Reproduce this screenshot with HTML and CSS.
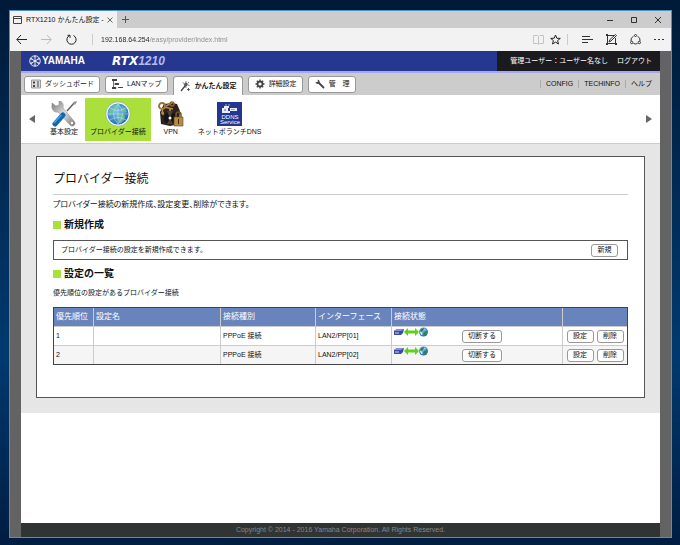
FILE: index.html
```
<!DOCTYPE html>
<html lang="ja">
<head>
  <meta charset="UTF-8">
  <meta name="viewport" content="width=device-width, initial-scale=1.0">
  <title>RTX1210 かんたん設定</title>
  <link rel="stylesheet" href="styles.css">
</head>
<body>

  <!-- Shared icons -->
  <svg class="defs" aria-hidden="true">
    <defs>
      <radialGradient id="ocean" cx="40%" cy="35%" r="70%">
        <stop offset="0" stop-color="#7cc8ef"/>
        <stop offset="1" stop-color="#1c66b0"/>
      </radialGradient>
      <linearGradient id="steel" x1="0" y1="0" x2="1" y2="1">
        <stop offset="0" stop-color="#777"/>
        <stop offset=".5" stop-color="#ddd"/>
        <stop offset="1" stop-color="#777"/>
      </linearGradient>
    </defs>
    <symbol id="link-up" viewBox="0 0 34 10">
      <path d="M0 4l3-2h7l-1 4-2 2H0z" fill="#3d4ba3"/>
      <path d="M0 4l3-2h7l-3 2z" fill="#8892d0"/>
      <path d="M1 6h4" stroke="#cdd3f5" stroke-width="1"/>
      <path d="M10 5l4-4v2.500h7V1l4 4-4 4V6.500h-7V9z" fill="#5fd01c"/>
      <circle cx="29.500" cy="5" r="4.500" fill="url(#ocean)"/>
      <path d="M27 2l3-1-1 3-2 1-1-1zM30 5l3-1-1 3-2 2-1-2z" fill="#3b7f45"/>
      <path d="M26 5l2 1v2zM30 2l2 1" stroke="#dff3ff" stroke-width=".6" fill="#dff3ff"/>
    </symbol>
  </svg>

  <div class="window">
    <!-- Browser tabs -->
    <div class="tab-strip">
      <div class="browser-tab">
        <svg width="10" height="10" viewBox="0 0 10 10" fill="none" stroke="#444"><path d="M.5 1.500h8v7h-8zM.5 3.500h8"/></svg>
        <span class="tab-title">RTX1210 かんたん設定 -</span>
        <button type="button" aria-label="タブを閉じる"><svg width="6" height="6" viewBox="0 0 6 6" stroke="#444" stroke-width=".8"><path d="M.5.5l5 5M5.500.5l-5 5"/></svg></button>
      </div>
      <button type="button" class="new-tab" aria-label="新しいタブ"><svg width="7" height="7" viewBox="0 0 7 7" stroke="#555"><path d="M3.500 0v7M0 3.500h7"/></svg></button>
      <div class="window-buttons">
        <button type="button" aria-label="最小化"><svg width="6" height="6" viewBox="0 0 6 6" stroke="#333"><path d="M0 3.500h6"/></svg></button>
        <button type="button" aria-label="最大化"><svg width="6" height="6" viewBox="0 0 6 6" stroke="#333" fill="none"><path d="M.5.5h5v5h-5z"/></svg></button>
        <button type="button" aria-label="閉じる"><svg width="6" height="6" viewBox="0 0 6 6" stroke="#333"><path d="M0 0l6 6M6 0L0 6"/></svg></button>
      </div>
    </div>

    <!-- Browser toolbar -->
    <div class="toolbar">
      <div class="history">
        <button type="button" aria-label="戻る"><svg width="11" height="11" viewBox="0 0 11 11" fill="none" stroke="#222"><path d="M5 1L.8 5.500 5 10M1 5.500h10"/></svg></button>
        <button type="button" aria-label="進む"><svg width="11" height="11" viewBox="0 0 11 11" fill="none" stroke="#bbb"><path d="M6 1l4.200 4.500L6 10M10 5.500H0"/></svg></button>
        <button type="button" aria-label="更新"><svg width="11" height="11" viewBox="0 0 11 11" fill="none" stroke="#222"><path d="M3.500 1.500A4.600 4.600 0 1 0 7.500 1.500M1.500 1.300h2.500v2.500"/></svg></button>
      </div>
      <input class="address" type="text" aria-label="アドレス" value="192.168.64.254/easy/provider/index.html">
      <div class="page-tools">
        <button type="button" aria-label="読み取りビュー"><svg width="11" height="11" viewBox="0 0 11 11" fill="none" stroke="#c4c4c4"><path d="M5.500 2v8M.5 1.500h4l1 1 1-1h4v8h-4l-1 1-1-1h-4z"/></svg></button>
        <button type="button" aria-label="お気に入り"><svg width="11" height="11" viewBox="0 0 11 11" fill="none" stroke="#222"><path d="M5.500 1l1.300 3.200 3.500.2-2.700 2.200.9 3.400-3-1.900-3 1.900.9-3.400L.7 4.400l3.500-.2z"/></svg></button>
      </div>
      <div class="browser-tools">
        <button type="button" aria-label="ハブ"><svg width="11" height="11" viewBox="0 0 11 11" stroke="#333"><path d="M0 2.500h8M0 5.500h11M0 8.500h6"/></svg></button>
        <button type="button" aria-label="Web ノート"><svg width="11" height="11" viewBox="0 0 11 11" fill="none" stroke="#333"><path d="M8 1.500H1.500v8h8V4M3 8l1-2.500 5.500-5 1 1L5 7z"/><path d="M0 0h2v2H0zM0 9h2v2H0zM9 9h2v2H9z" fill="#333" stroke="none"/></svg></button>
        <button type="button" aria-label="共有"><svg width="11" height="11" viewBox="0 0 11 11" fill="none" stroke="#333"><path d="M3.500 2.200A4.500 4.500 0 0 0 1 7M7.500 2.200A4.500 4.500 0 0 1 10 7M3.500 9.500q2 1 4 0"/><circle cx="5.500" cy="1.500" r="1"/><circle cx="1.700" cy="8.500" r="1.200"/><circle cx="9.300" cy="8.500" r="1.200"/></svg></button>
        <button type="button" aria-label="その他"><svg width="11" height="11" viewBox="0 0 11 11" fill="#333"><path d="M0 5h2v1H0zM4 5h2v1H4zM8 5h2v1H8z"/></svg></button>
      </div>
    </div>

    <div class="viewport">
      <div class="page">
        <!-- Header -->
        <header>
          <div class="logo">
            <svg width="12" height="12" viewBox="0 0 12 12" fill="none" stroke="#fff">
              <circle cx="6" cy="6" r="5.300" stroke-width=".8"/>
              <path d="M6 1v10M1.700 3.500l8.600 5M10.300 3.500l-8.600 5" stroke-width=".9"/>
              <path d="M4.800 2.500L6 1.200l1.200 1.300M4.800 9.500L6 10.800l1.200-1.300M2 5.200l-.2-1.700 1.700-.2M10 5.200l.2-1.700-1.700-.2M2 6.800l-.2 1.700 1.700.2M10 6.800l.2 1.700-1.700.2" stroke-width=".6"/>
            </svg>
            <span class="brand">YAMAHA</span>
          </div>
          <div class="model">RTX<span>1210</span></div>
          <div class="user-bar">
            <span>管理ユーザー：ユーザー名なし</span>
            <a href="#logout">ログアウト</a>
          </div>
        </header>

        <!-- Main menu -->
        <nav class="main-nav">
          <a class="nav-tab" href="#dashboard">
            <svg width="10" height="10" viewBox="0 0 10 10"><path d="M.5 1h9v8h-9z" fill="#ddd" stroke="#777" stroke-width=".7"/><path d="M2 2.500h2v2H2zM2 6h2v2H2zM6 2.500h2v1H6zM6 4.500h2v1H6zM6 6.500h2v1H6z" fill="#444"/></svg>
            ダッシュボード
          </a>
          <a class="nav-tab" href="#lanmap">
            <svg width="11" height="10" viewBox="0 0 11 10"><path d="M1.500 1v8M1.500 5h2M1.500 9h3" fill="none" stroke="#777"/><path d="M0 0h5v2H0zM3 4h4v2H3zM0 8h4v2H0zM6 8h5v1H6z" fill="#444"/></svg>
            LANマップ
          </a>
          <a class="nav-tab active" href="#easy">
            <svg width="11" height="11" viewBox="0 0 11 11" fill="none" stroke="#444"><path d="M1 10l4-5" stroke-width="1.300"/><path d="M4 2.500L2.500 1.500M6 2V0M8 4l1.500.5M7.500 2.500L9 1M5.500 5l.5 2" stroke-width=".7"/><path d="M8.500 7v3M7 8.500h3" stroke-width=".8"/><circle cx="5.800" cy="3.600" r="1.400" fill="#666"/></svg>
            かんたん設定
          </a>
          <a class="nav-tab" href="#detail">
            <svg width="10" height="10" viewBox="0 0 10 10" fill="none" stroke="#444"><circle cx="5" cy="5" r="2.500" stroke-width="1.800"/><path d="M5 .5V2M5 8v1.500M.5 5H2M8 5h1.500M1.800 1.800l1 1M7.200 7.200l1 1M8.200 1.800l-1 1M2.800 7.200l-1 1" stroke-width="1.400"/></svg>
            詳細設定
          </a>
          <a class="nav-tab" href="#admin">
            <svg width="10" height="10" viewBox="0 0 10 10" fill="none" stroke="#444"><path d="M4 4l4.500 4.500" stroke-width="1.800" stroke-linecap="round"/><path d="M2.500.8l.5 1.700-1 .8-1.400-.5C.5 5 3 5.500 4.300 4.300 5.300 3 4.500.8 2.500.8z" fill="#444" stroke="none"/></svg>
            管　理
          </a>
          <ul class="sub-links">
            <li><a href="#config">CONFIG</a></li>
            <li><a href="#techinfo">TECHINFO</a></li>
            <li><a href="#help">ヘルプ</a></li>
          </ul>
        </nav>

        <!-- Easy setup menu -->
        <nav class="icon-nav">
          <button type="button" aria-label="前へ"><svg width="6" height="8" viewBox="0 0 6 8" fill="#666"><path d="M6 0v8L0 4z"/></svg></button>
          <div class="icon-list">
            <a class="icon-item" href="#basic">
              <svg width="26" height="26" viewBox="0 0 26 26">
                <path d="M24 1l-8 9" stroke="#666" stroke-width="1.600"/>
                <path d="M22 2l3-2 1 1-2 3z" fill="#999"/>
                <path d="M15 11l-3 3" stroke="#888" stroke-width="2"/>
                <path d="M1 2l4 3 3-1V0c3 0 5 3 4 7l11 13c3 3-1 7-4 4L7 11c-4 1-7-3-6-7z" fill="url(#steel)" stroke="#888" stroke-width=".5"/>
                <circle cx="21" cy="22" r="1.200" fill="#fff"/>
                <path d="M12 14L4 23" stroke="#1265b4" stroke-width="5" stroke-linecap="round"/>
                <path d="M10.500 14L3 22" stroke="#4aa3e8" stroke-width="1.200"/>
              </svg>
              基本設定
            </a>
            <a class="icon-item selected" href="#provider">
              <svg width="26" height="26" viewBox="0 0 26 26">
                <circle cx="13" cy="13" r="12.300" fill="#eaf6f8" stroke="#8fa98a" stroke-width=".7"/>
                <circle cx="13" cy="13" r="10.500" fill="url(#ocean)"/>
                <path d="M5 8l4-4 5-1 1 2-3 1 1 2-3 3-3 1-2 3-2-2zM12 13l4-1 4 3-1 4-4 4-2-4-2-3zM17 5l3 2 2 4-3 1-3-3z" fill="#71bea3" opacity=".8"/>
                <path d="M3 13h20M13 3v20M5 7q8 5 16 0M5 19q8-5 16 0M13 3q-9 10 0 20M13 3q9 10 0 20" fill="none" stroke="#c4e8f5" stroke-width=".5"/>
              </svg>
              プロバイダー接続
            </a>
            <a class="icon-item" href="#vpn">
              <svg width="26" height="26" viewBox="0 0 26 26">
                <path d="M6 3l8-1 5 1 3 7-1 13-9 2-9-2L2 11z" fill="#2d211c"/>
                <circle cx="12" cy="17" r="6" fill="#151212"/>
                <path d="M12 17l-3-7 6 0zM12 17l-3 6h6z" fill="#4b4039"/>
                <circle cx="12" cy="17" r="1.500" fill="#fff"/>
                <circle cx="4" cy="5" r="3" fill="none" stroke="#987137" stroke-width="1.800"/>
                <path d="M6 6l9 2M12 7v3M8 5L14 2M4 7l1 7M3 12h3" stroke="#b18a4b" stroke-width="1.700"/>
                <circle cx="14" cy="3" r="2" fill="none" stroke="#8d652e" stroke-width="1.400"/>
                <path d="M18 17v-3q0-3 2.500-3t2.500 3v3" fill="none" stroke="#6e582e" stroke-width="1.500"/>
                <path d="M16 16h9v9h-9z" fill="#b98b42" stroke="#654621" stroke-width=".6"/>
                <path d="M20 18h1v5h-1z" fill="#392713"/>
              </svg>
              VPN
            </a>
            <a class="icon-item" href="#ddns">
              <svg width="26" height="26" viewBox="0 0 26 26">
                <path d="M0 1h25v24H0z" fill="#24368f"/>
                <path d="M5 7h2V5h5v2h-1v3h2v2H5zM13 7h7v3h-7z" fill="#e8ebf8"/>
                <path d="M7 9h2M15 8v1M17 8v1" stroke="#24368f" stroke-width=".8"/>
                <path d="M9 3v2M12 3v2" stroke="#c8cdec" stroke-width=".8"/>
                <text x="13" y="18" class="ddns-mark">DDNS</text>
                <text x="13" y="23" class="ddns-mark">Service</text>
              </svg>
              ネットボランチDNS
            </a>
          </div>
          <button type="button" aria-label="次へ"><svg width="6" height="8" viewBox="0 0 6 8" fill="#666"><path d="M0 0v8l6-4z"/></svg></button>
        </nav>

        <!-- Provider settings -->
        <main>
          <section class="card">
            <h1>プロバイダー接続</h1>
            <p class="lead">プロバイダー接続の新規作成、設定変更、削除ができます。</p>

            <h2>新規作成</h2>
            <div class="create-box">
              <p>プロバイダー接続の設定を新規作成できます。</p>
              <button type="button" class="btn">新規</button>
            </div>

            <h2>設定の一覧</h2>
            <p class="note">優先順位の設定があるプロバイダー接続</p>
            <table>
              <thead>
                <tr>
                  <th class="col-order">優先順位</th>
                  <th>設定名</th>
                  <th class="col-type">接続種別</th>
                  <th class="col-interface">インターフェース</th>
                  <th class="col-status">接続状態</th>
                  <th class="col-actions"></th>
                </tr>
              </thead>
              <tbody>
                <tr>
                  <td>1</td>
                  <td></td>
                  <td>PPPoE 接続</td>
                  <td>LAN2/PP[01]</td>
                  <td>
                    <div class="status">
                      <svg width="34" height="10" role="img" aria-label="接続中"><use href="#link-up"/></svg>
                      <button type="button" class="btn">切断する</button>
                    </div>
                  </td>
                  <td>
                    <div class="actions">
                      <button type="button" class="btn">設定</button>
                      <button type="button" class="btn">削除</button>
                    </div>
                  </td>
                </tr>
                <tr>
                  <td>2</td>
                  <td></td>
                  <td>PPPoE 接続</td>
                  <td>LAN2/PP[02]</td>
                  <td>
                    <div class="status">
                      <svg width="34" height="10" role="img" aria-label="接続中"><use href="#link-up"/></svg>
                      <button type="button" class="btn">切断する</button>
                    </div>
                  </td>
                  <td>
                    <div class="actions">
                      <button type="button" class="btn">設定</button>
                      <button type="button" class="btn">削除</button>
                    </div>
                  </td>
                </tr>
              </tbody>
            </table>
          </section>
        </main>

        <!-- Footer -->
        <footer>
          <p>Copyright © 2014 - 2016 Yamaha Corporation. All Rights Reserved.</p>
        </footer>
      </div>
    </div>
  </div>

</body>
</html>
```

FILE: styles.css
```
/* General Reset */
* {
  margin: 0;
  padding: 0;
  box-sizing: border-box;
}

body {
  display: flex;
  min-height: 100vh;
  padding: 10px 8px 7px 9px;
  background: linear-gradient(to bottom, #001a38, #00305f 45%, #003a70 65%, #001d42);
  font-family: "Liberation Sans", "Noto Sans CJK JP", sans-serif;
  font-size: 7px;
  line-height: 10px;
  color: #111;
}

a {
  color: inherit;
  text-decoration: none;
}

button {
  border: none;
  background: none;
  font: inherit;
  color: inherit;
  cursor: pointer;
}

svg {
  display: block;
  flex: none;
}

.defs {
  position: absolute;
  width: 0;
  height: 0;
}

/* Browser window */
.window {
  flex: 1;
  display: flex;
  flex-direction: column;
  border: 1px solid #4c93bf;
}

.tab-strip {
  display: flex;
  align-items: center;
  height: 17px;
  background-color: #ccc;
}

.browser-tab {
  display: flex;
  align-items: center;
  gap: 3px;
  height: 100%;
  padding: 0 4px 0 3px;
  background-color: #f2f2f2;
}

.tab-title {
  white-space: nowrap;
}

.new-tab {
  margin-left: 5px;
}

.window-buttons {
  display: flex;
  gap: 18px;
  margin-left: auto;
  padding-right: 10px;
}

.toolbar {
  display: flex;
  align-items: center;
  height: 23px;
  padding: 0 6px;
  background-color: #f2f2f2;
}

.history {
  display: flex;
  gap: 14px;
  padding-right: 15px;
  border-right: 1px solid #ccc;
}

.address {
  flex: 1;
  min-width: 0;
  height: 16px;
  padding-left: 8px;
  border: none;
  outline: none;
  /* host part dark, path part grey */
  background: linear-gradient(to right, #222 56px, #888 56px);
  -webkit-background-clip: text;
  background-clip: text;
  font: inherit;
  color: transparent;
}

.page-tools {
  display: flex;
  gap: 6px;
  padding-right: 6px;
  border-right: 1px solid #ccc;
}

.browser-tools {
  display: flex;
  gap: 13px;
  padding-left: 14px;
}

/* Page */
.viewport {
  flex: 1;
  display: flex;
  padding: 0 11px;
  background-color: #636363;
}

.page {
  flex: 1;
  display: flex;
  flex-direction: column;
  background-color: white;
}

header {
  display: flex;
  align-items: center;
  height: 22px;
  background-color: #26378f;
  border-bottom: 2px solid #a8a6ea;
  color: white;
}

.logo {
  display: flex;
  align-items: center;
  gap: 1px;
  width: 91px;
  padding-left: 8px;
}

.brand {
  font-size: 10px;
  font-weight: bold;
}

.model {
  font-family: "DejaVu Sans", sans-serif;
  font-size: 12px;
  font-weight: bold;
  font-style: italic;
}

.model span {
  font-family: "Liberation Sans", sans-serif;
  color: #b4bdf0;
}

.user-bar {
  display: flex;
  align-items: center;
  gap: 9px;
  height: 100%;
  margin-left: auto;
  padding: 0 8px 0 13px;
  background-color: #1b1b1f;
}

/* Main menu */
.main-nav {
  display: flex;
  align-items: center;
  gap: 5px;
  height: 22px;
  padding: 0 8px 0 3px;
  background-color: #ccc;
}

.nav-tab {
  display: flex;
  align-items: center;
  gap: 4px;
  height: 17px;
  padding: 0 5px 0 6px;
  border: 1px solid #999;
  border-radius: 3px;
  background-color: white;
}

.nav-tab.active {
  align-self: flex-end;
  height: 19px;
  border-bottom: none;
  border-radius: 3px 3px 0 0;
  font-weight: bold;
}

.sub-links {
  display: flex;
  margin-left: auto;
  list-style: none;
}

.sub-links li {
  margin-left: 5px;
  padding-left: 5px;
  border-left: 1px solid #aaa;
  line-height: 8px;
}

/* Easy setup menu */
.icon-nav {
  display: flex;
  align-items: center;
  gap: 8px;
  height: 49px;
  padding: 0 8px;
  border-bottom: 1px solid #ccc;
}

.icon-list {
  flex: 1;
  display: flex;
}

.icon-item {
  display: flex;
  flex-direction: column;
  align-items: center;
  height: 43px;
  padding: 3px 7px;
}

.icon-item.selected {
  padding: 3px 5px;
  background-color: #a9e03b;
}

.ddns-mark {
  font-size: 6px;
  text-anchor: middle;
  fill: white;
}

/* Provider settings */
main {
  padding: 12px 15px 15px;
  background-color: #e6e6e6;
}

.card {
  padding: 14px 16px 32px;
  border: 1px solid #555;
  background-color: white;
}

h1 {
  padding-bottom: 7px;
  border-bottom: 1px solid #ccc;
  font-size: 12px;
  font-weight: normal;
  line-height: 16px;
}

.lead {
  margin: 5px 0 10px;
  font-size: 8px;
  font-feature-settings: "palt";
}

h2 {
  display: flex;
  align-items: center;
  gap: 3px;
  font-size: 10px;
  line-height: 10px;
}

h2::before {
  content: "";
  width: 8px;
  height: 8px;
  background-color: #a9e03b;
}

.create-box {
  display: flex;
  justify-content: space-between;
  align-items: center;
  height: 20px;
  margin: 10px 0 9px;
  padding: 0 9px 0 7px;
  border: 1px solid #555;
}

.note {
  margin: 9px 0;
}

.btn {
  min-width: 27px;
  height: 13px;
  padding: 0 5px;
  border: 1px solid #999;
  border-radius: 3px;
  background-color: white;
  line-height: 10px;
}

table {
  width: 100%;
  table-layout: fixed;
  border-collapse: separate;
  border-spacing: 0;
  border: 1px solid #444;
}

th, td {
  height: 19px;
  padding: 0 2px;
  text-align: left;
  white-space: nowrap;
}

td {
  border-top: 1px solid #ccc;
}

th + th, td + td {
  border-left: 1px solid #ccc;
}

th {
  height: 18px;
  background-color: #6984bd;
  font-size: 8px;
  font-weight: normal;
  color: white;
}

tbody tr:nth-child(even) {
  background-color: #f5f5f5;
}

.col-order {
  width: 39px;
}

.col-type {
  width: 95px;
}

.col-interface {
  width: 76px;
}

.col-status {
  width: 171px;
}

.col-actions {
  width: 65px;
}

.status {
  display: flex;
  align-items: center;
  gap: 34px;
  height: 18px;
}

.status svg {
  align-self: flex-start;
}

.actions {
  display: flex;
  justify-content: center;
  gap: 3px;
}

/* Footer */
footer {
  margin-top: auto;
  background-color: #303434;
  color: #888;
  text-align: center;
  line-height: 14px;
}
```
